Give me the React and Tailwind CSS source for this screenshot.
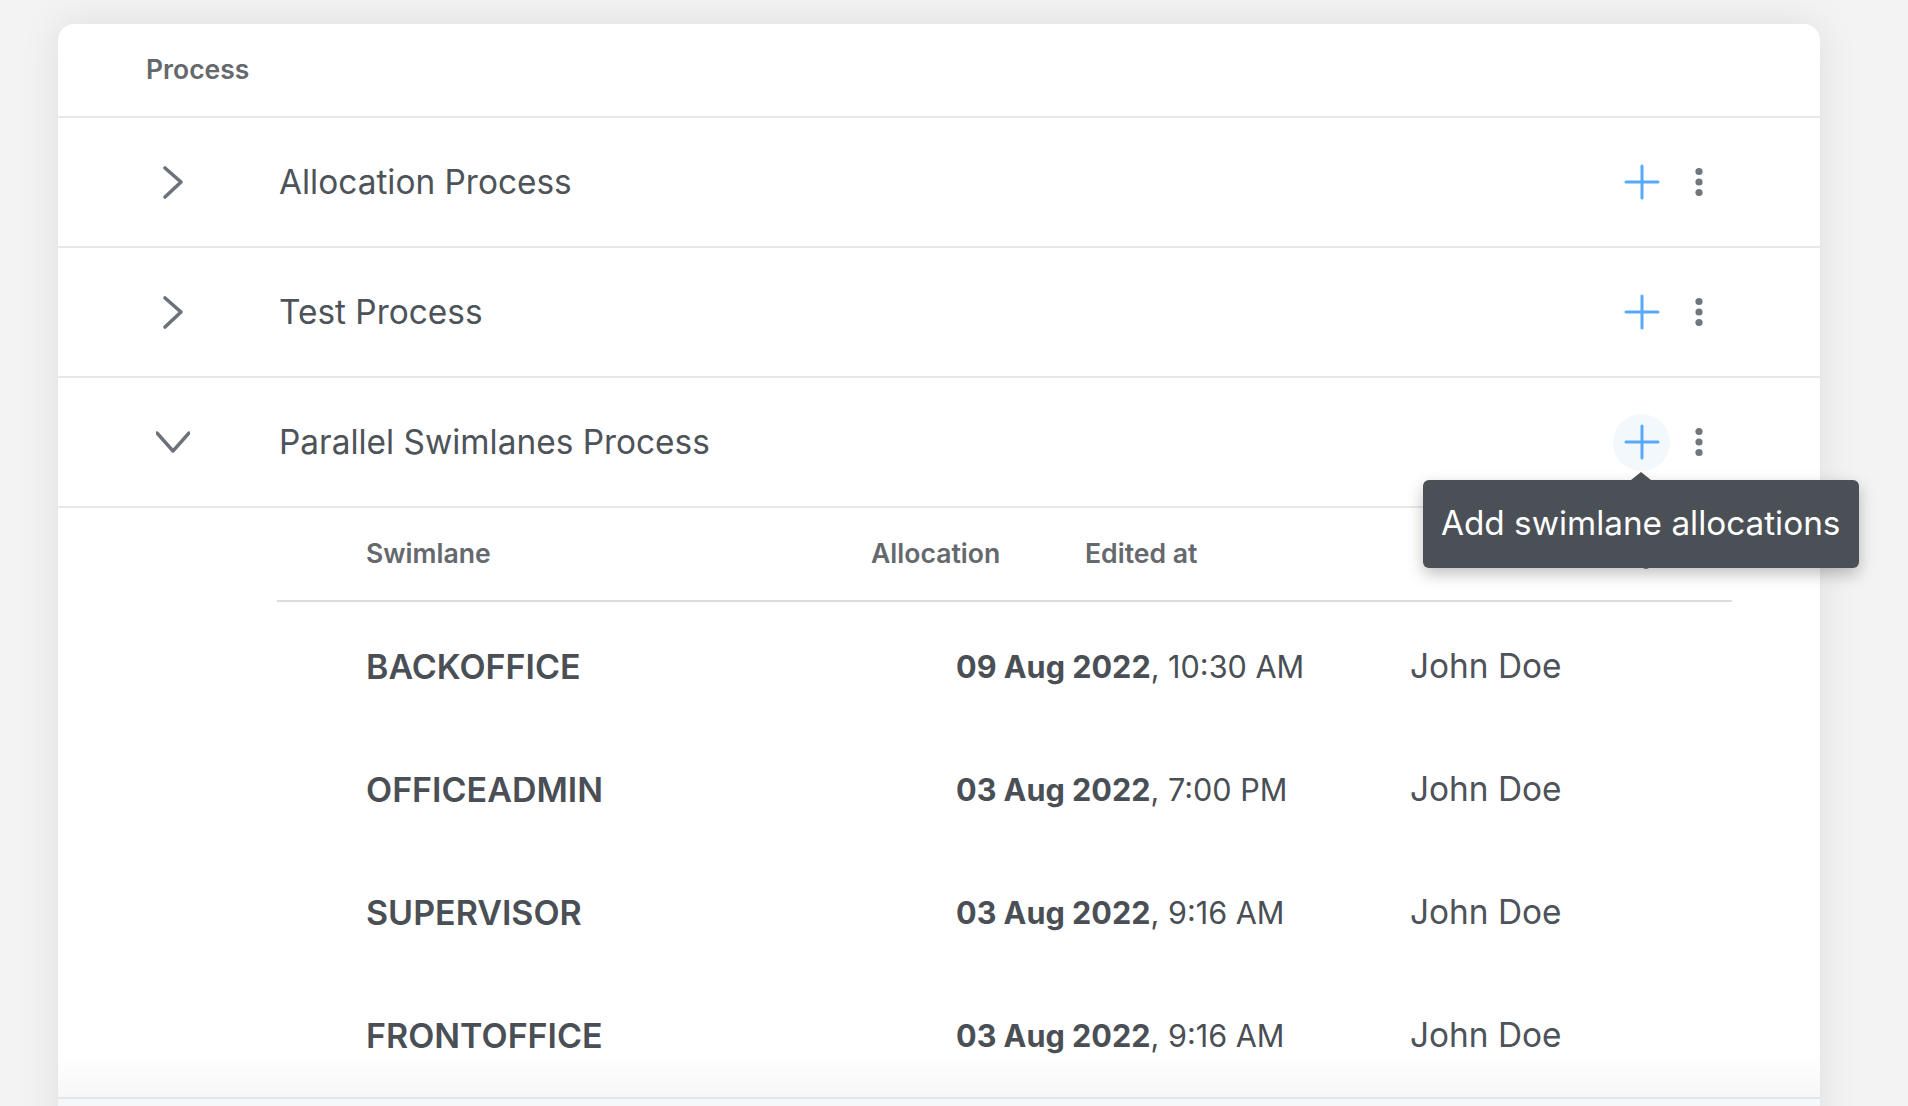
import React from "react";

const processes = [
  { name: "Allocation Process", open: false },
  { name: "Test Process", open: false },
  { name: "Parallel Swimlanes Process", open: true },
];

const swimlanes = [
  { name: "BACKOFFICE", date: "09 Aug 2022", time: "10:30 AM", by: "John Doe" },
  { name: "OFFICEADMIN", date: "03 Aug 2022", time: "7:00 PM", by: "John Doe" },
  { name: "SUPERVISOR", date: "03 Aug 2022", time: "9:16 AM", by: "John Doe" },
  { name: "FRONTOFFICE", date: "03 Aug 2022", time: "9:16 AM", by: "John Doe" },
];

const ChevronRight = () => (
  <svg width="34" height="40" viewBox="0 0 34 40" fill="none">
    <path d="M9 6 L25 20 L9 35" stroke="#6c7279" strokeWidth="3.6" strokeLinecap="round" strokeLinejoin="round" />
  </svg>
);

const ChevronDown = () => (
  <svg width="34" height="40" viewBox="0 0 34 40" fill="none">
    <path d="M1 11 L17 29 L33 11" stroke="#6c7279" strokeWidth="3.4" strokeLinecap="round" strokeLinejoin="round" />
  </svg>
);

const Plus = () => (
  <svg width="36" height="36" viewBox="0 0 36 36" fill="none">
    <path d="M18 2 V34 M2 18 H34" stroke="#58a9f7" strokeWidth="3" strokeLinecap="round" />
  </svg>
);

const Kebab = () => (
  <svg width="20" height="32" viewBox="0 0 20 32" fill="#70767c">
    <circle cx="10" cy="5.5" r="3.6" />
    <circle cx="10" cy="16" r="3.6" />
    <circle cx="10" cy="26.5" r="3.6" />
  </svg>
);

const Tooltip = () => (
  <div className="absolute left-[-190px] top-[66px] z-10">
    <div className="absolute left-[208px] top-[-8px] w-0 h-0 border-l-[10px] border-r-[10px] border-b-[8px] border-l-transparent border-r-transparent border-b-[#4b5057]" />
    <div className="w-[436px] h-[88px] rounded-[6px] bg-[#4b5057] pl-[18px] flex items-center shadow-[0_6px_16px_rgba(0,0,0,0.25)]">
      <span className="text-white text-[33.3px] whitespace-nowrap">Add swimlane allocations</span>
    </div>
  </div>
);

const ProcessRow = ({ item }) => (
  <div className="h-[130px] border-b-2 border-[#e6e9ec] flex items-center">
    <div className="pl-[98px] flex items-center">
      <div className="w-[34px] flex justify-center">
        {item.open ? <ChevronDown /> : <ChevronRight />}
      </div>
      <span className="ml-[89px] text-[33.4px] text-[#4d5359]">{item.name}</span>
    </div>
    <div className="ml-auto mr-[111px] flex items-center gap-[19px]">
      <div className="relative">
        <button className={"w-[57px] h-[57px] rounded-full flex items-center justify-center " + (item.open ? "bg-[#f3f8fd]" : "")}>
          <Plus />
        </button>
        {item.open && <Tooltip />}
      </div>
      <Kebab />
    </div>
  </div>
);

export default function App() {
  return (
    <div className="h-[1106px] overflow-hidden bg-[#f3f3f3] pt-[24px] pl-[58px]" style={{ fontFamily: "Inter, 'Noto Sans', sans-serif" }}>
      <div className="w-[1762px] bg-white rounded-t-[16px] shadow-[0_0_40px_rgba(0,0,0,0.09)]">
        <div className="h-[94px] border-b-2 border-[#e6e9ec] flex items-center pl-[88px]">
          <span className="text-[26.5px] font-semibold text-[#65696d]">Process</span>
        </div>

        {processes.map((p) => (
          <ProcessRow key={p.name} item={p} />
        ))}

        <div>
          <div className="ml-[219px] mr-[88px] h-[94px] border-b-2 border-[#dcdcdc] flex items-center text-[26.6px] font-semibold text-[#65696d]">
            <span className="ml-[89px] w-[505px]">Swimlane</span>
            <span className="w-[214px]">Allocation</span>
            <span className="w-[453px]">Edited at</span>
            <span>Edited by</span>
          </div>
          <div className="pt-[3px]">
            {swimlanes.map((s, i) => (
              <div
                key={s.name}
                className={"h-[123px] pl-[308px] flex items-center text-[#4a4f55] " + (i === swimlanes.length - 1 ? "bg-gradient-to-b from-white from-65% to-[#f7f7f7]" : "")}
              >
                <span className="w-[590px] text-[34px] font-semibold">{s.name}</span>
                <span className="w-[454px] text-[30.6px]">
                  <span className="font-bold">{s.date}</span>, {s.time}
                </span>
                <span className="text-[33.4px] text-[#4d5359]">{s.by}</span>
              </div>
            ))}
          </div>
        </div>
        <div className="border-t-2 border-[#e3e6e9] h-[60px] bg-[#f6f7f8]" />
      </div>
    </div>
  );
}
